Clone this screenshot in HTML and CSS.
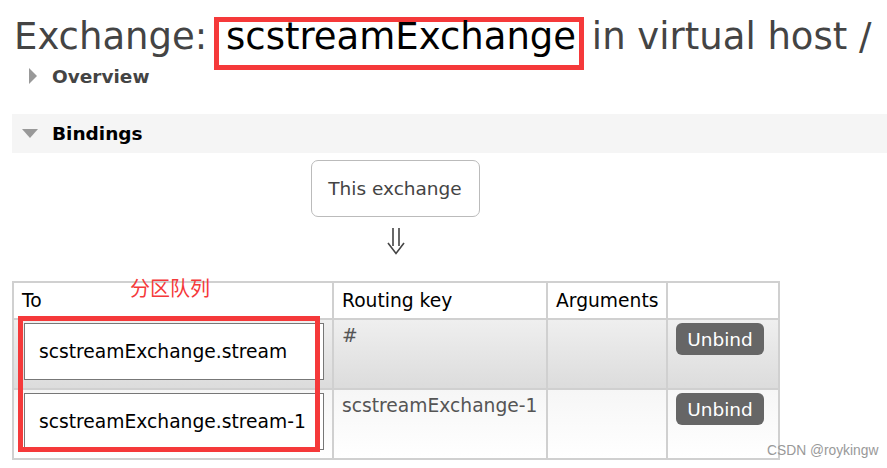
FILE: index.html
```html
<!DOCTYPE html>
<html lang="en">
<head>
<meta charset="utf-8">
<title>Exchange: scstreamExchange</title>
<link rel="stylesheet" href="styles.css">
</head>
<body>
<div class="page">
  <h1 class="title">Exchange: <span class="title-name">scstreamExchange</span> in virtual host /</h1>
  <div class="section-head collapsed">
    <span class="tri-right"></span>
    <span class="section-label">Overview</span>
  </div>
  <div class="section-head expanded">
    <span class="tri-down"></span>
    <span class="section-label">Bindings</span>
  </div>
  <div class="flow">
    <div class="this-exchange">This exchange</div>
    <svg class="flow-arrow" width="20" height="28" viewBox="0 0 20 28" aria-label="down">
      <path d="M7 1 V19 M13 1 V19" stroke="#444" stroke-width="1.6" fill="none"/>
      <path d="M2 16 L10 26.5 L18 16" stroke="#444" stroke-width="1.6" fill="none" stroke-linejoin="miter"/>
    </svg>
  </div>
  <div class="table-wrap">
    <table class="bindings">
      <colgroup>
        <col class="c1">
        <col class="c2">
        <col class="c3">
        <col class="c4">
      </colgroup>
      <thead>
        <tr>
          <th>To</th>
          <th>Routing key</th>
          <th>Arguments</th>
          <th></th>
        </tr>
      </thead>
      <tbody>
        <tr class="row-alt1">
          <td><div class="queue-box">scstreamExchange.stream</div></td>
          <td class="key">#</td>
          <td></td>
          <td><button class="btn">Unbind</button></td>
        </tr>
        <tr class="row-alt2">
          <td><div class="queue-box">scstreamExchange.stream-1</div></td>
          <td class="key">scstreamExchange-1</td>
          <td></td>
          <td><button class="btn">Unbind</button></td>
        </tr>
      </tbody>
    </table>
    <div class="note">分区队列</div>
    <div class="mark-box"></div>
  </div>
  <div class="watermark">CSDN @roykingw</div>
</div>
</body>
</html>
```

FILE: styles.css
```css
html, body {
  margin: 0;
  padding: 0;
  background: #fff;
}

.page {
  position: relative;
  width: 887px;
  height: 468px;
  overflow: hidden;
  font-family: "DejaVu Sans", Verdana, sans-serif;
  color: #444;
}

.title {
  margin: 17px 0 0 14px;
  font-family: "DejaVu Sans", Verdana, sans-serif;
  font-weight: normal;
  font-size: 37px;
  line-height: 40px;
  height: 53px;
  color: #444;
  white-space: nowrap;
}

.title-name {
  display: inline-block;
  box-sizing: border-box;
  height: 53px;
  line-height: 30px;
  border: 5px solid #f5393a;
  padding: 0 3px 13px 7px;
  margin: 0 -4px 0 -5px;
  color: #000;
}

.section-head {
  display: flex;
  align-items: center;
}

.section-head.collapsed {
  height: 20px;
  margin-top: -4px;
  padding-left: 29px;
}

.section-head.expanded {
  margin: 28px 0 0 12px;
  height: 39px;
  padding-left: 10px;
  background: #f5f5f5;
}

.tri-right {
  width: 0;
  height: 0;
  border-top: 8px solid transparent;
  border-bottom: 8px solid transparent;
  border-left: 8px solid #999;
  margin-right: 15px;
}

.tri-down {
  width: 0;
  height: 0;
  border-left: 8px solid transparent;
  border-right: 8px solid transparent;
  border-top: 9px solid #999;
  margin-right: 14px;
}

.section-label {
  font-weight: bold;
  font-size: 18.5px;
  color: #444;
}

.expanded .section-label {
  color: #000;
}

.flow {
  display: flex;
  flex-direction: column;
  align-items: center;
  width: 790px;
  margin-top: 7px;
}

.this-exchange {
  box-sizing: border-box;
  width: 169px;
  height: 57px;
  border: 1px solid #bbb;
  border-radius: 7px;
  display: flex;
  align-items: center;
  justify-content: center;
  font-size: 18.5px;
  color: #444;
}

.flow-arrow {
  display: block;
  margin-top: 10px;
  margin-left: 2px;
}

.table-wrap {
  position: relative;
  margin: 26px 0 0 12px;
  width: 766px;
}

.bindings {
  border-collapse: collapse;
  width: 766px;
  font-size: 18.7px;
  table-layout: fixed;
}

.c1 { width: 320px; }
.c2 { width: 214px; }
.c3 { width: 120px; }
.c4 { width: 112px; }

.bindings th,
.bindings td {
  border: 2px solid #d0d0d0;
  vertical-align: top;
  padding: 0;
}

.bindings thead tr {
  height: 37px;
}

.bindings th {
  text-align: left;
  font-weight: normal;
  color: #000;
  padding: 0 8px;
  vertical-align: middle;
  background: #fff;
}

.bindings tbody tr {
  height: 70px;
}

.row-alt1 td {
  background: linear-gradient(#efefef, #dcdcdc);
}

.row-alt2 td {
  background: linear-gradient(#f6f6f6, #fff);
}

.queue-box {
  box-sizing: border-box;
  margin: 3px 8px 0 10px;
  height: 57px;
  border: 1px solid #777;
  background: #fff;
  color: #000;
  display: flex;
  align-items: center;
  padding-left: 14px;
  white-space: nowrap;
}

.bindings td.key {
  padding: 5px 8px 0;
  color: #555;
}

.btn {
  display: block;
  margin: 3px 0 0 8px;
  width: 88px;
  height: 32px;
  border: none;
  border-radius: 6px;
  background: #666;
  color: #fff;
  font-family: "DejaVu Sans", Verdana, sans-serif;
  font-size: 18.5px;
  padding: 0;
}

.note {
  position: absolute;
  left: 118px;
  top: -4px;
  font-family: "Noto Sans CJK SC", sans-serif;
  font-size: 20px;
  line-height: 22px;
  color: #f5393a;
}

.mark-box {
  position: absolute;
  left: 6px;
  top: 35px;
  width: 302px;
  height: 136px;
  box-sizing: border-box;
  border: 5px solid #f5393a;
}

.watermark {
  position: absolute;
  left: 767px;
  top: 443px;
  font-family: "Liberation Sans", Arial, sans-serif;
  font-size: 13.8px;
  color: #999;
}
```
